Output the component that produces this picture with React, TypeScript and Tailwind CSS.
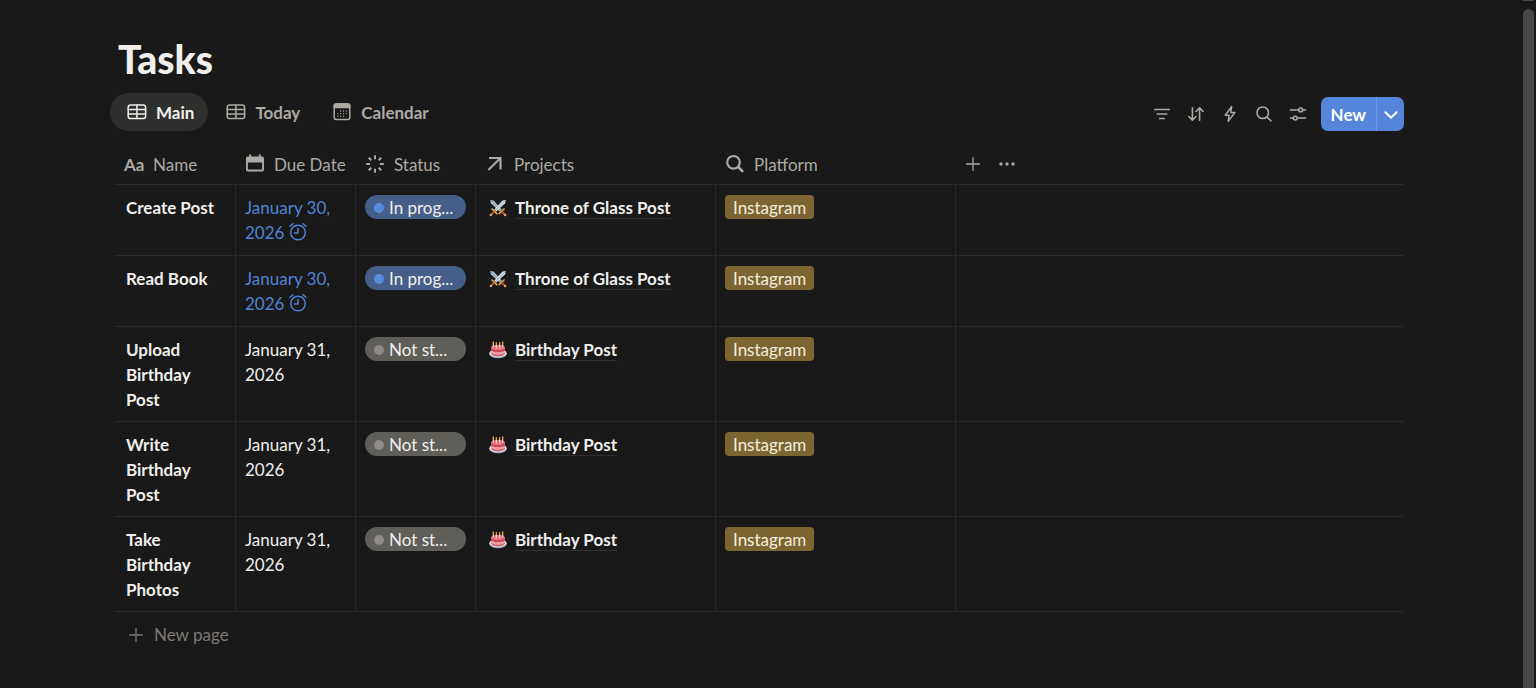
import type { ReactNode } from "react";

type Task = {
  name: string;
  due: string;
  late: boolean;
  status: "In prog..." | "Not st...";
  project: string;
};

const tasks: Task[] = [
  { name: "Create Post", due: "January 30, 2026", late: true, status: "In prog...", project: "Throne of Glass Post" },
  { name: "Read Book", due: "January 30, 2026", late: true, status: "In prog...", project: "Throne of Glass Post" },
  { name: "Upload Birthday Post", due: "January 31, 2026", late: false, status: "Not st...", project: "Birthday Post" },
  { name: "Write Birthday Post", due: "January 31, 2026", late: false, status: "Not st...", project: "Birthday Post" },
  { name: "Take Birthday Photos", due: "January 31, 2026", late: false, status: "Not st...", project: "Birthday Post" },
];

function Stroke({ size = "size-5", width = 1.4, children }: { size?: string; width?: number; children: ReactNode }) {
  return (
    <svg viewBox="0 0 20 20" className={`${size} shrink-0`} fill="none" stroke="currentColor" strokeWidth={width} strokeLinecap="round" strokeLinejoin="round" aria-hidden="true">
      {children}
    </svg>
  );
}

function TableIcon() {
  return (
    <Stroke width={1.5}>
      <rect x="1.2" y="3" width="17.4" height="13.6" rx="2.4" />
      <path d="M1.2 7.5h17.4M1.2 12h17.4M9.9 3v13.6" />
    </Stroke>
  );
}

function CalendarViewIcon() {
  return (
    <Stroke width={1.5}>
      <rect x="2.2" y="2" width="15.6" height="15.4" rx="2" />
      <path d="M2.2 4a2 2 0 0 1 2-2h11.6a2 2 0 0 1 2 2v1.500H2.2z" fill="currentColor" />
      <path d="M8.600 9h.01M11.400 9h.01M14.200 9h.01M5.800 11.600h.01M8.600 11.600h.01M11.400 11.600h.01M14.200 11.600h.01M5.800 14.200h.01M8.600 14.200h.01M11.400 14.200h.01" strokeWidth="1.300" />
    </Stroke>
  );
}

function DateIcon() {
  return (
    <svg viewBox="0 0 20 20" className="size-5 shrink-0" fill="currentColor" aria-hidden="true">
      <path fillRule="evenodd" d="M4.200 .5h2v2h7.600v-2h2v2h1.400a1.800 1.800 0 0 1 1.800 1.800v11.400a1.800 1.800 0 0 1-1.800 1.800H2.800A1.800 1.800 0 0 1 1 15.700V4.300A1.800 1.800 0 0 1 2.800 2.500h1.400zM2.900 8.500v6.600c0 .3.200.500.500.500h13.200c.3 0 .5-.2.5-.5V8.500z" />
    </svg>
  );
}

function StatusIcon() {
  return (
    <Stroke width={2}>
      <path d="M10 1.200v4M10 14.800v4M1.200 10h4M14.800 10h4M3.800 3.800l2.500 2.500M13.700 13.700l2.500 2.500M16.200 3.800l-2.500 2.500M6.300 13.700l-2.500 2.500" strokeLinecap="butt" />
    </Stroke>
  );
}

function RelationIcon() {
  return (
    <Stroke width={2.1}>
      <path d="M4 4h11.500v11.500M15.500 4L3.400 16.100" strokeLinecap="butt" strokeLinejoin="miter" />
    </Stroke>
  );
}

function RollupIcon() {
  return (
    <Stroke width={2.2}>
      <circle cx="8.500" cy="8.300" r="6.300" />
      <path d="M13.200 13l4.200 4.200" strokeWidth="2.600" />
    </Stroke>
  );
}

function PlusIcon() {
  return (
    <Stroke size="size-4" width={1.6}>
      <path d="M10 2v16M2 10h16" />
    </Stroke>
  );
}

function AlarmIcon() {
  return (
    <svg viewBox="0 0 20 20" className="ml-1 inline size-5 align-[-3px]" fill="none" stroke="currentColor" strokeWidth="1.500" strokeLinecap="round" strokeLinejoin="round" aria-hidden="true">
      <circle cx="10" cy="10.500" r="7.300" />
      <path d="M10 6.400v4.600H6.400M2 4.300l3-2.600M18 4.300l-3-2.600" />
    </svg>
  );
}

function SwordsIcon() {
  return (
    <svg viewBox="0 0 18 18" className="size-[18px] shrink-0" aria-hidden="true">
      <path d="M1.200 1.100l3.300.5 8.200 9-2 1.900L1.900 4.200z" fill="#b4c5d2" />
      <path d="M1.500 1.300l10.300 10.400" stroke="#71838f" strokeWidth=".7" />
      <path d="M16.800 1.100l-3.300.5-8.200 9 2 1.900 8.800-8.300z" fill="#d2e0ea" />
      <path d="M16.500 1.300L6.200 11.700" stroke="#8799a6" strokeWidth=".7" />
      <path d="M3 10l4.800 4.600M15 10l-4.800 4.600" stroke="#e9a640" strokeWidth="1.700" strokeLinecap="round" />
      <path d="M4.800 13L2 15.900M13.200 13l2.800 2.900" stroke="#a75a3c" strokeWidth="1.900" />
      <circle cx="1.900" cy="16" r="1.300" fill="#e8a06c" />
      <circle cx="16.100" cy="16" r="1.300" fill="#e8a06c" />
    </svg>
  );
}

function CakeIcon() {
  return (
    <svg viewBox="0 0 18 18" className="size-[18px] shrink-0" aria-hidden="true">
      <ellipse cx="9" cy="12.800" rx="8.800" ry="4.400" fill="#8fa6b8" />
      <ellipse cx="9" cy="12.200" rx="8.600" ry="4.100" fill="#d5e1ea" />
      <path d="M2.200 6.500v5.800c0 3.900 13.600 3.900 13.600 0V6.500z" fill="#f0a1a8" />
      <path d="M2.200 11.400c1.400 3 12.200 3 13.600 0v1.300c-1.400 3.400-12.200 3.400-13.600 0z" fill="#d8606d" />
      <path d="M2.200 6.500c0 3.300 13.600 3.300 13.600 0v3c-1 1.500-2 .6-3.200 1.200s-2.200.4-3.600.4-2.400.2-3.600-.4-2.200.3-3.200-1.200z" fill="#cf4557" />
      <ellipse cx="9" cy="6.400" rx="6.800" ry="2.600" fill="#e46c78" />
      <path d="M4.300 3v3.600M7.300 3.600v4M10.700 3.600v4M13.700 3v3.600" stroke="#f5ded0" strokeWidth="1.100" />
      <path d="M4.300 1v1.700M7.300 1.600v1.700M10.700 1.600v1.700M13.700 1v1.700" stroke="#f4ad3c" strokeWidth="1.300" strokeLinecap="round" />
    </svg>
  );
}

function Tool({ label, children }: { label: string; children: ReactNode }) {
  return (
    <button type="button" aria-label={label} className="flex size-[34px] items-center justify-center text-[#ada9a3]">
      {children}
    </button>
  );
}

function Heading({ icon, label }: { icon: ReactNode; label: string }) {
  return (
    <th scope="col" className="p-0 pl-[9px] text-left font-normal">
      <span className="flex items-center gap-[9px] whitespace-nowrap">
        {icon}
        {label}
      </span>
    </th>
  );
}

function TaskRow({ task }: { task: Task }) {
  const started = task.status === "In prog...";
  const cell = "border-r border-b border-[#2a2a2a] px-[9px] py-0 pt-[10px]";
  return (
    <tr className="align-top">
      <td className="border-r border-b border-[#2a2a2a] pt-[10px] pr-[9px] pb-[9px] pl-[11px] font-bold">{task.name}</td>
      <td className={`${cell} pb-[10px] ${task.late ? "text-[#5083d7]" : ""}`}>
        {task.due}
        {task.late && <AlarmIcon />}
      </td>
      <td className={cell}>
        <span className={`flex h-6 items-center gap-[5px] rounded-full pt-px pr-2 pl-[9px] whitespace-nowrap ${started ? "bg-[#465f89]" : "bg-[#5f5e59]"}`}>
          <span className={`size-[10px] shrink-0 rounded-full ${started ? "bg-[#5a8ae0]" : "bg-[#8e8b86]"}`} />
          {task.status}
        </span>
      </td>
      <td className={cell}>
        <span className="flex items-center gap-2 pl-1">
          {started ? <SwordsIcon /> : <CakeIcon />}
          <a href="#project" className="font-bold whitespace-nowrap underline decoration-[#2f2f2f] decoration-1 underline-offset-4">
            {task.project}
          </a>
        </span>
      </td>
      <td className={cell}>
        <span className="flex h-6 w-fit items-center rounded-[4px] bg-[#7d6433] px-2 pt-px text-[#f5eede]">Instagram</span>
      </td>
      <td className="border-b border-[#2a2a2a]" />
    </tr>
  );
}

export default function App() {
  return (
    <div className="relative min-h-screen bg-[#191919] pt-[34px] pr-[132px] pl-[115px] font-['Lato','Noto_Sans',sans-serif] text-[17px] leading-[25px] text-[#f0efed]">
      <h1 className="pl-[3px] text-[39px] leading-[50px] font-black">Tasks</h1>

      <div className="mt-[9px] flex items-end justify-between">
        <nav aria-label="Views" className="-ml-[5px] flex items-center font-bold text-[#ada9a3]">
          <button type="button" aria-current="page" className="flex h-[38px] items-center gap-[9px] rounded-full bg-[#2f2f2d] pr-[14px] pl-[17px] text-[#f0efed]">
            <TableIcon />
            Main
          </button>
          <button type="button" className="flex h-[38px] items-center gap-[9px] px-[18px]">
            <TableIcon />
            Today
          </button>
          <button type="button" className="flex h-[38px] items-center gap-[9px] px-[14px]">
            <CalendarViewIcon />
            Calendar
          </button>
        </nav>

        <div className="flex items-center">
          <Tool label="Filter">
            <Stroke size="size-[18px]" width={1.9}>
              <path d="M2 5h16M4.800 10h10.400M7.500 15h5" />
            </Stroke>
          </Tool>
          <Tool label="Sort">
            <Stroke size="size-[18px]" width={1.8}>
              <path d="M6 3v13.500M2 12.800l4 4 4-4M14 17V3.500M10 7.200l4-4 4 4" />
            </Stroke>
          </Tool>
          <Tool label="Automations">
            <Stroke size="size-[18px]" width={1.7}>
              <path d="M11.800 1.800L4.800 11.400h4.200L8 18.200l7.400-9.800h-4.600z" />
            </Stroke>
          </Tool>
          <Tool label="Search">
            <Stroke size="size-[18px]" width={1.8}>
              <circle cx="8.600" cy="8.600" r="6.400" />
              <path d="M13.400 13.400l4.400 4.400" />
            </Stroke>
          </Tool>
          <Tool label="View settings">
            <Stroke size="size-[18px]" width={1.7}>
              <path d="M1.500 5.500h9M15.500 5.500h3M1.500 14.500h3M9.500 14.500h9" />
              <circle cx="13" cy="5.500" r="2.100" />
              <circle cx="7" cy="14.500" r="2.100" />
            </Stroke>
          </Tool>
          <div className="ml-[6px] flex h-[34px] overflow-hidden rounded-[7px] bg-[#5585da] font-bold text-white">
            <button type="button" className="px-[10px]">New</button>
            <button type="button" aria-label="More ways to add" className="flex w-7 items-center justify-center border-l border-[#6f98e2] pt-[2px]">
              <Stroke size="size-4" width={2.4}>
                <path d="M3 6.500l7 7 7-7" />
              </Stroke>
            </button>
          </div>
        </div>
      </div>

      <table className="mt-[13px] w-full table-fixed border-separate border-spacing-0">
        <colgroup>
          <col className="w-[121px]" />
          <col className="w-[120px]" />
          <col className="w-[120px]" />
          <col className="w-[240px]" />
          <col className="w-[240px]" />
          <col />
        </colgroup>
        <thead className="text-[#ada9a3] [&_th]:h-[41px] [&_th]:border-b [&_th]:border-[#2a2a2a]">
          <tr>
            <Heading icon={<span className="w-5 font-bold" aria-hidden="true">Aa</span>} label="Name" />
            <Heading icon={<DateIcon />} label="Due Date" />
            <Heading icon={<StatusIcon />} label="Status" />
            <Heading icon={<RelationIcon />} label="Projects" />
            <Heading icon={<RollupIcon />} label="Platform" />
            <th className="p-0 pl-[9px]">
              <span className="flex items-center gap-[18px]">
                <button type="button" aria-label="Add property">
                  <PlusIcon />
                </button>
                <button type="button" aria-label="More options">
                  <svg viewBox="0 0 16 16" className="size-4" fill="currentColor" aria-hidden="true">
                    <circle cx="2" cy="8" r="1.700" />
                    <circle cx="8" cy="8" r="1.700" />
                    <circle cx="14" cy="8" r="1.700" />
                  </svg>
                </button>
              </span>
            </th>
          </tr>
        </thead>
        <tbody>
          {tasks.map((task) => (
            <TaskRow key={task.name} task={task} />
          ))}
        </tbody>
      </table>

      <button type="button" className="mt-[10px] ml-[13px] flex items-center gap-[10px] text-[#7d7a75]">
        <PlusIcon />
        New page
      </button>

      <div className="absolute inset-y-0 right-0 flex w-[13px] flex-col gap-2 pr-[2px]" aria-hidden="true">
        <div className="h-px bg-[#4a4a4a]" />
        <div className="flex-1 rounded-t-full bg-[#474747]" />
      </div>
    </div>
  );
}
